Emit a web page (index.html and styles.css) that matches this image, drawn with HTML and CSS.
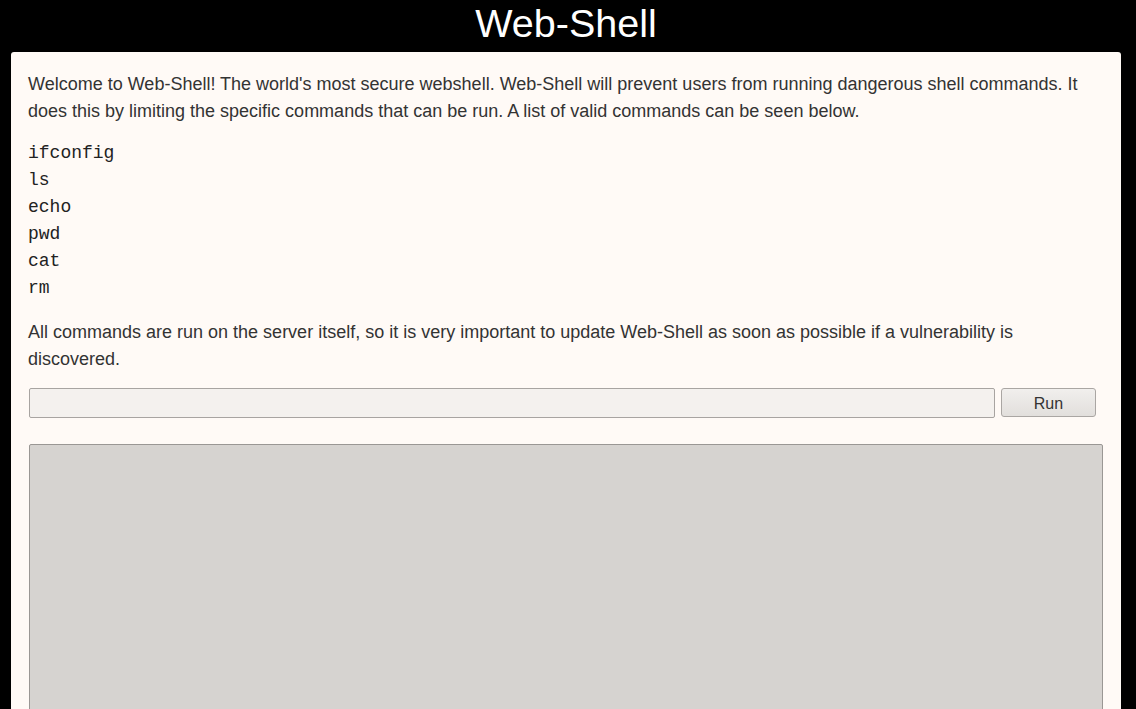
FILE: index.html
```html
<!DOCTYPE html>
<html lang="en">
<head>
<meta charset="utf-8">
<title>Web-Shell</title>
<link rel="stylesheet" href="styles.css">
</head>
<body>
<div class="page">
  <h1 class="title">Web-Shell</h1>
  <main class="card">
    <p class="intro">Welcome to Web-Shell! The world's most secure webshell. Web-Shell will prevent users from running dangerous shell commands. It does this by limiting the specific commands that can be run. A list of valid commands can be seen below.</p>
    <pre class="commands">ifconfig
ls
echo
pwd
cat
rm</pre>
    <p class="note">All commands are run on the server itself, so it is very important to update Web-Shell as soon as possible if a vulnerability is discovered.</p>
    <form class="run-row" onsubmit="return false;">
      <input class="cmd-input" type="text">
      <button class="run-btn" type="submit">Run</button>
    </form>
    <div class="output"></div>
  </main>
</div>
</body>
</html>
```
FILE: styles.css
```css
html, body {
  margin: 0;
  padding: 0;
  background: #000;
  height: 100%;
  overflow: hidden;
}
.page {
  margin: 0 15px 0 11px;
  font-family: "Liberation Sans", Arial, sans-serif;
}
.title {
  margin: 0 0 6px 0;
  font-size: 39.5px;
  line-height: 46px;
  font-weight: normal;
  color: #fff;
  text-align: center;
}
.card {
  background: #fffaf6;
  border-radius: 3px;
  padding: 19px 17px 0 17px;
  color: #333;
  font-size: 18px;
  line-height: 27px;
}
.intro {
  margin: 0;
}
.commands {
  margin: 15px 0 17px 0;
  font-family: "Liberation Mono", "Courier New", monospace;
  font-size: 18px;
  line-height: 27px;
  color: #222;
}
.note {
  margin: 0;
}
.run-row {
  display: flex;
  align-items: flex-start;
  gap: 6px;
  margin: 15px 8px 0 1px;
}
.cmd-input {
  flex: 1;
  box-sizing: border-box;
  height: 30px;
  margin: 0;
  background: #f4f1ee;
  border: 1px solid #a8a4a1;
  border-radius: 2px;
  font-size: 16px;
  padding: 2px 6px;
}
.run-btn {
  box-sizing: border-box;
  width: 95px;
  height: 29px;
  margin: 0;
  border: 1px solid #aaa6a3;
  border-radius: 3px;
  background: linear-gradient(#f1efed, #e2dfdc);
  font-family: "Liberation Sans", Arial, sans-serif;
  font-size: 16px;
  color: #333;
  padding: 2px 0 0 0;
}
.output {
  box-sizing: border-box;
  margin: 26px 1px 0 1px;
  height: 320px;
  background: #d6d3d0;
  border: 1px solid #9a9794;
  border-radius: 2px;
}
```
